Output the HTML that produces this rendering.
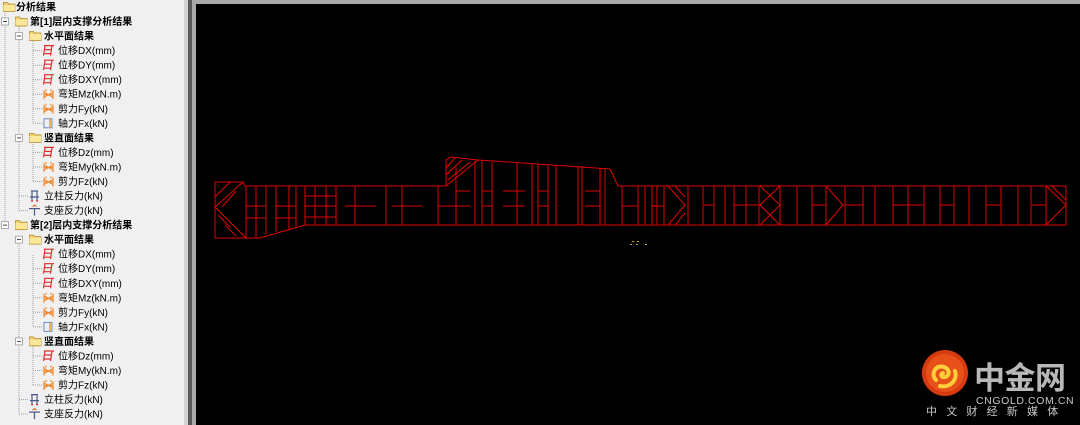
<!DOCTYPE html>
<html><head><meta charset="utf-8"><style>
html,body{margin:0;padding:0;width:1080px;height:425px;overflow:hidden;background:#000}
svg{display:block}
text{font-family:"Liberation Sans","Noto Sans CJK SC",sans-serif;font-size:10px;fill:#000}
.b{font-weight:bold}
</style></head><body>
<svg width="1080" height="425" viewBox="0 0 1080 425" xmlns="http://www.w3.org/2000/svg">
<defs>
<g id="fd"><path d="M0.5 -4.5 h4 l1 1.5 h6.5 v7.5 h-11.5 z" fill="#f3d26b" stroke="#b08a2a" stroke-width="0.8"/><rect x="0.5" y="-2" width="11.5" height="6" fill="#fbe79a"/></g>
<g id="mn"><rect x="-3.5" y="-3.5" width="7" height="7" fill="#fff" stroke="#999" stroke-width="0.8"/><line x1="-2" y1="0" x2="2" y2="0" stroke="#333" stroke-width="0.9"/></g>
<g id="ir" stroke="#e03030" stroke-width="1.2" fill="none"><path d="M1 -5 h10 M2 -5 l-1.5 10 M9 -5 l-1.5 10 M1.5 -1 h7 M1 3 h7"/></g>
<g id="io" stroke="#f08a30" stroke-width="1.2" fill="none"><path d="M1 -4 v9 M10 -4 v9 M1 -2 l9 5 M10 -2 l-9 5 M1 0.5 h9 M3 -5 v2 M8 -5 v2"/></g>
<g id="ib" fill="none" stroke-width="1"><rect x="1" y="-4.5" width="8" height="9" stroke="#6a8ac8"/><path d="M7 -4.5 v9" stroke="#f0a020" stroke-width="1.6"/></g>
<g id="ic" fill="none" stroke="#4a5a8a" stroke-width="1.2"><path d="M2 -5 h7 M3 -5 v10 M8 -5 v10 M1 1 h9"/><path d="M2 5 h2 M7 5 h2" stroke="#e03030"/></g>
<g id="is" fill="none" stroke-width="1.2"><path d="M0 -2 h11 M5.5 -2 v7" stroke="#4a5a8a"/><path d="M3.5 -4 l2 -1.5 l2 1.5" stroke="#e07030"/></g>
</defs>
<rect x="0" y="0" width="184" height="425" fill="#f0f0f0"/>
<rect x="184" y="0" width="4" height="425" fill="#d4d4d4"/>
<rect x="188" y="0" width="4" height="425" fill="#5a5a5a"/>
<rect x="192" y="0" width="888" height="425" fill="#a8a8a8"/>
<rect x="196" y="4" width="884" height="421" fill="#000"/>
<g stroke="#a0a0a0" stroke-width="1" stroke-dasharray="1,1" fill="none">
<path d="M5 11 V225 M19 26 V210.6 M33 41 V123.3 M33 142 V181.5 M19 196 h10 M19 210.6 h10 M33 50.6 h10 M33 65.2 h10 M33 79.7 h10 M33 94.2 h10 M33 108.8 h10 M33 123.3 h10 M33 152.4 h10 M33 167 h10 M33 181.5 h10"/>
<path d="M19 240 V414 M33 255 V326.9 M33 346 V385 M19 399.6 h10 M19 414 h10 M33 268.7 h10 M33 283.3 h10 M33 297.8 h10 M33 312.3 h10 M33 326.9 h10 M33 356 h10 M33 370.5 h10 M33 385 h10"/>
</g>
<use href="#fd" x="3" y="7"/><text class="b" x="16" y="10.5">分析结果</text>
<use href="#mn" x="5" y="21.5"/><use href="#fd" x="15" y="21.5"/><text class="b" x="30" y="25">第[1]层内支撑分析结果</text>
<use href="#mn" x="19" y="36"/><use href="#fd" x="29" y="36"/><text class="b" x="44" y="39.5">水平面结果</text>
<use href="#ir" x="43" y="50.6"/><text x="58" y="54">位移DX(mm)</text>
<use href="#ir" x="43" y="65.2"/><text x="58" y="68.7">位移DY(mm)</text>
<use href="#ir" x="43" y="79.7"/><text x="58" y="83.2">位移DXY(mm)</text>
<use href="#io" x="43" y="94.2"/><text x="58" y="97.7">弯矩Mz(kN.m)</text>
<use href="#io" x="43" y="108.8"/><text x="58" y="112.3">剪力Fy(kN)</text>
<use href="#ib" x="43" y="123.3"/><text x="58" y="126.8">轴力Fx(kN)</text>
<use href="#mn" x="19" y="137.9"/><use href="#fd" x="29" y="137.9"/><text class="b" x="44" y="141.4">竖直面结果</text>
<use href="#ir" x="43" y="152.4"/><text x="58" y="155.9">位移Dz(mm)</text>
<use href="#io" x="43" y="167"/><text x="58" y="170.5">弯矩My(kN.m)</text>
<use href="#io" x="43" y="181.5"/><text x="58" y="185">剪力Fz(kN)</text>
<use href="#ic" x="29" y="196"/><text x="44" y="199.5">立柱反力(kN)</text>
<use href="#is" x="29" y="210.6"/><text x="44" y="214.1">支座反力(kN)</text>
<use href="#mn" x="5" y="225.1"/><use href="#fd" x="15" y="225.1"/><text class="b" x="30" y="228.6">第[2]层内支撑分析结果</text>
<use href="#mn" x="19" y="239.6"/><use href="#fd" x="29" y="239.6"/><text class="b" x="44" y="243.1">水平面结果</text>
<use href="#ir" x="43" y="254.2"/><text x="58" y="257.7">位移DX(mm)</text>
<use href="#ir" x="43" y="268.7"/><text x="58" y="272.2">位移DY(mm)</text>
<use href="#ir" x="43" y="283.3"/><text x="58" y="286.8">位移DXY(mm)</text>
<use href="#io" x="43" y="297.8"/><text x="58" y="301.3">弯矩Mz(kN.m)</text>
<use href="#io" x="43" y="312.3"/><text x="58" y="315.8">剪力Fy(kN)</text>
<use href="#ib" x="43" y="326.9"/><text x="58" y="330.4">轴力Fx(kN)</text>
<use href="#mn" x="19" y="341.4"/><use href="#fd" x="29" y="341.4"/><text class="b" x="44" y="344.9">竖直面结果</text>
<use href="#ir" x="43" y="356"/><text x="58" y="359.5">位移Dz(mm)</text>
<use href="#io" x="43" y="370.5"/><text x="58" y="374">弯矩My(kN.m)</text>
<use href="#io" x="43" y="385"/><text x="58" y="388.5">剪力Fz(kN)</text>
<use href="#ic" x="29" y="399.6"/><text x="44" y="403.1">立柱反力(kN)</text>
<use href="#is" x="29" y="414.1"/><text x="44" y="417.6">支座反力(kN)</text>

<g stroke="#e00000" stroke-width="1" fill="none">
<path d="M215 182 H243 L245 186 H446 V160 L451 157 L478 160 L610 169 L618 186 H1066 V225 H305 L260 238 H215 Z"/>
<path d="M243 182 L215 207 L246 238"/>
<path d="M215 197 L230 182 M222 207 L236 191 M225 225 L236 236 M218 215 L230 227"/>
<path d="M446 186 L478 160 M446 175 L462 160 M446 168 L455 158 M448 180 L470 162"/>
<path d="M246 186 V238 M256 186 V238 M266 186 V234 M276 186 V232 M289 186 V229 M296 186 V227 M305 186 V225 M315 186 V225 M326 186 V225 M336 186 V225 M355 186 V225 M386 186 V225 M402 186 V225 M438 186 V225 M456 167 V225 M475 161 V225 M482 161 V225 M492 162 V225 M517 163 V225 M532 164 V225 M538 164 V225 M548 165 V225 M556 165 V225 M578 166 V225 M582 166 V225 M600 168 V225 M605 168 V225 M622 186 V225 M638 186 V225 M645 186 V225 M652 186 V225 M657 186 V225 M664 186 V225 M688 186 V225 M703 186 V225 M714 186 V225 M725 186 V225 M734 186 V225 M746 186 V225 M759 186 V225 M780 186 V225 M797 186 V225 M812 186 V225 M826 186 V225 M845 186 V225 M863 186 V225 M875 186 V225 M893 186 V225 M908 186 V225 M924 186 V225 M940 186 V225 M954 186 V225 M969 186 V225 M986 186 V225 M1001 186 V225 M1018 186 V225 M1031 186 V225 M1046 186 V225"/>
<path d="M246 206 H266 M246 218 H266 M275 206 H296 M275 218 H296 M305 196 H336 M305 206 H336 M305 217 H336 M345 206 H376 M392 206 H422 M438 206 H456 M456 191 H470 M456 206 H470 M482 191 H492 M482 206 H492 M503 191 H525 M503 206 H525 M538 191 H548 M538 206 H548 M585 191 H600 M585 206 H600 M622 206 H638 M652 206 H664 M703 205 H714 M734 205 H759 M812 205 H826 M845 205 H863 M893 205 H924 M940 205 H954 M986 205 H1001 M1031 205 H1046"/>
<path d="M668 186 L685 205 L668 225 M675 186 L685 197 M675 225 L685 213 M760 186 L780 205 L760 225 M780 186 L760 205 M780 225 L760 205 M826 186 L843 205 L826 225 M1046 186 L1066 205 L1046 225 M1052 186 L1066 200"/>
</g>
<g fill="#c8a040"><rect x="632" y="241" width="2" height="1"/><rect x="637" y="241" width="2" height="1"/><rect x="630" y="244" width="2" height="1"/><rect x="636" y="244" width="2" height="1"/><rect x="645" y="244" width="2" height="1"/></g>
<circle cx="945" cy="373" r="23" fill="#d83a10"/>
<circle cx="945" cy="373" r="19" fill="#e8501a"/>
<path d="M936 380 c-6 -6 0 -16 8 -13 c6 2 6 9 1 10 c-4 1 -5 -3 -2 -4 M940 386 c10 2 18 -6 15 -15" stroke="#ffcf3a" stroke-width="4" fill="none" stroke-linecap="round"/>
<text x="974" y="389" style="font-size:31px;font-weight:bold;fill:#b8b8b8;font-family:'Noto Sans CJK SC',sans-serif;letter-spacing:-0.5px">中金网</text>
<text x="976" y="404" style="font-size:10.5px;fill:#c8c8c8;letter-spacing:0.6px">CNGOLD.COM.CN</text>
<text x="926" y="415" style="font-size:11px;fill:#c8c8c8;letter-spacing:9.2px">中文财经新媒体</text>
</svg>
</body></html>
